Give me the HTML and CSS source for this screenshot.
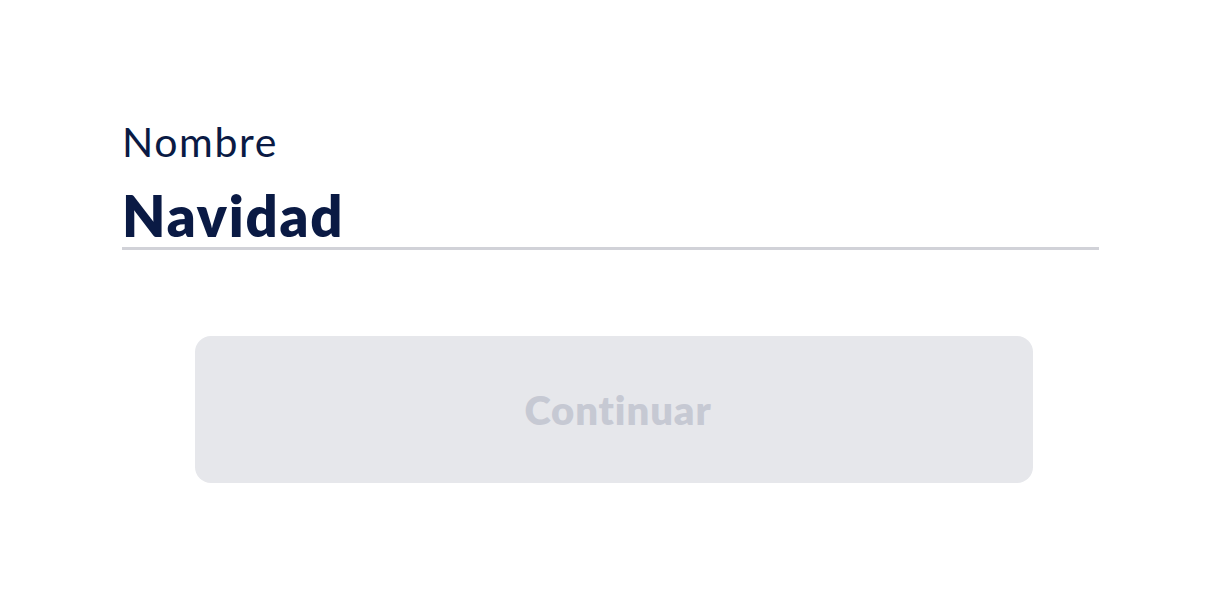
FILE: index.html
```html
<!DOCTYPE html>
<html lang="es">
<head>
<meta charset="utf-8">
<title>Nombre</title>
<link rel="stylesheet" href="styles.css">
</head>
<body>
<main class="form">
  <label class="field">
    <span class="field-label">Nombre</span>
    <span class="field-value">Navidad</span>
  </label>
  <button class="btn-continue" type="button" disabled>Continuar</button>
</main>
</body>
</html>
```
FILE: styles.css
```css
html, body {
  margin: 0;
  background: #ffffff;
}

body {
  font-family: Lato, "Open Sans", sans-serif;
  color: #0a1a44;
}

.form {
  display: flex;
  flex-direction: column;
  width: 977px;
  padding: 118px 0 0 122px;
}

.field {
  display: flex;
  flex-direction: column;
  border-bottom: 3px solid #d1d2d8;
}

.field-label {
  font-size: 41px;
  font-weight: 400;
  line-height: 48px;
  letter-spacing: 1.6px;
}

.field-value {
  font-size: 56px;
  font-weight: 800;
  line-height: 62px;
  margin-top: 19px;
  letter-spacing: 1.8px;
}

.btn-continue {
  margin: 86px 0 0 73px;
  width: 838px;
  height: 147px;
  border: none;
  border-radius: 16px;
  background: #e6e7eb;
  color: #c6c9d3;
  font-family: inherit;
  font-size: 40px;
  font-weight: 800;
  letter-spacing: 0.9px;
  padding: 0 0 0 8px;
}
```
